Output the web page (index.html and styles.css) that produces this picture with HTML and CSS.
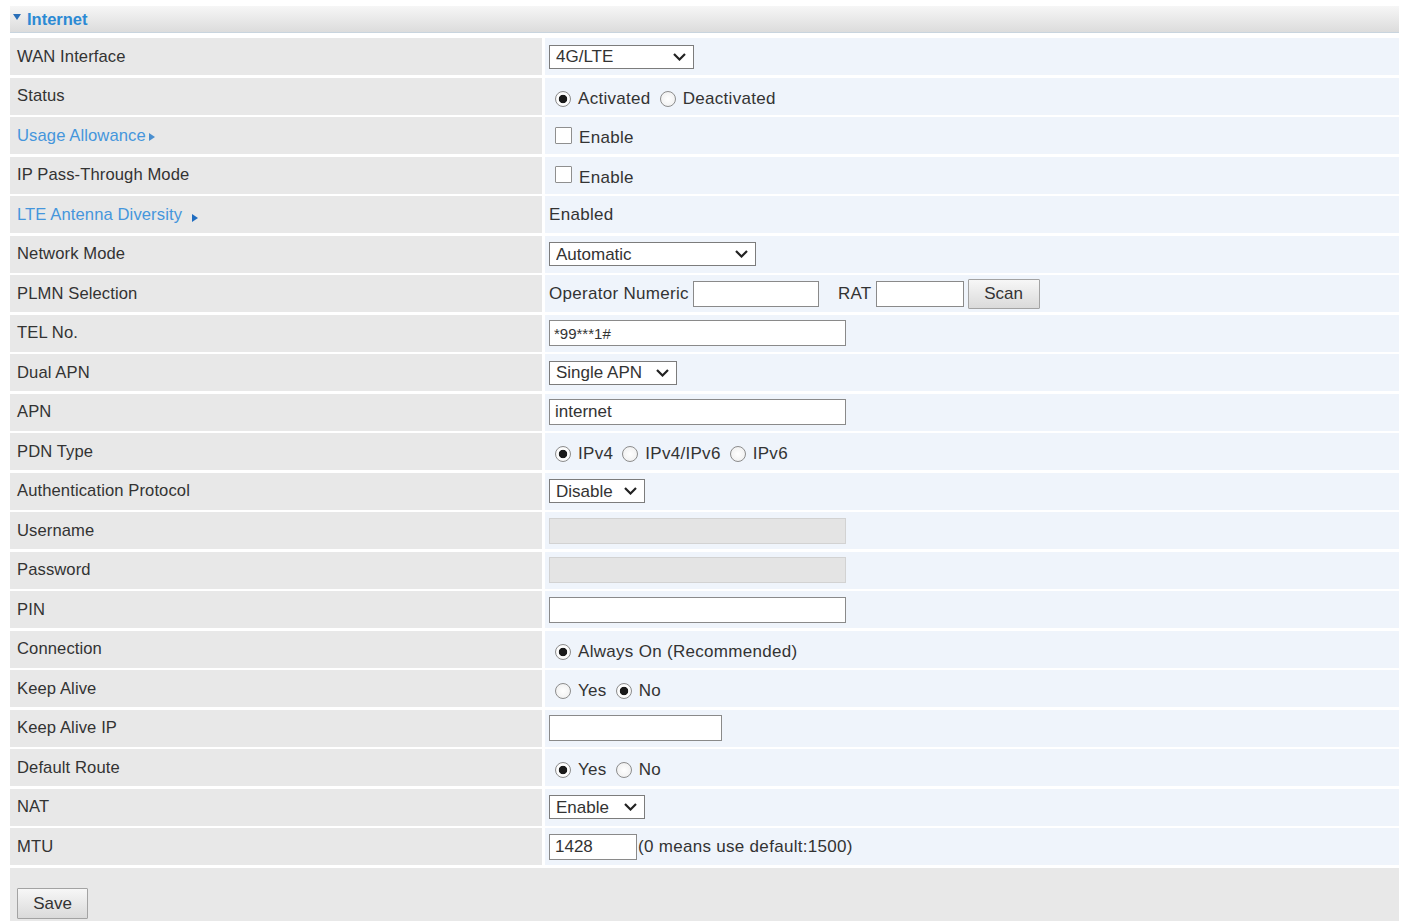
FILE: index.html
```html
<!DOCTYPE html>
<html lang="en">
  <head>
    <meta charset="UTF-8" />
    <title>Internet</title>
    <link rel="stylesheet" href="styles.css">
  </head>
  <body>
    <div class="panel">
      <div class="panel-title">
        <svg class="caret" width="8" height="6" viewBox="0 0 8 6"><polygon points="0,0 8,0 4,6" fill="#2a6fb8"/></svg>
        Internet
      </div>

      <form class="form-table">
        <div class="row">
          <div class="label">WAN Interface</div>
          <div class="field">
            <span class="select w-wan">
              <select><option>4G/LTE</option></select>
              <svg class="chev" width="13" height="8" viewBox="0 0 13 8"><polyline points="1,1 6.5,6.5 12,1" fill="none" stroke="#222" stroke-width="2.2"/></svg>
            </span>
          </div>
        </div>
        <div class="row">
          <div class="label">Status</div>
          <div class="field choices">
            <label class="choice"><input type="radio" name="status" checked />Activated</label>
            <label class="choice"><input type="radio" name="status" />Deactivated</label>
          </div>
        </div>
        <div class="row">
          <div class="label"><a class="link" href="#">Usage Allowance<svg class="arrow" width="6" height="8" viewBox="0 0 6 8"><polygon points="0,0 6,4 0,8" fill="#4a8fd0"/></svg></a></div>
          <div class="field choices">
            <label class="choice"><input type="checkbox" />Enable</label>
          </div>
        </div>
        <div class="row">
          <div class="label">IP Pass-Through Mode</div>
          <div class="field choices">
            <label class="choice"><input type="checkbox" />Enable</label>
          </div>
        </div>
        <div class="row">
          <div class="label"><a class="link" href="#">LTE Antenna Diversity<svg class="arrow lte" width="6" height="8" viewBox="0 0 6 8"><polygon points="0,0 6,4 0,8" fill="#1f6cc0"/></svg></a></div>
          <div class="field">Enabled</div>
        </div>
        <div class="row">
          <div class="label">Network Mode</div>
          <div class="field">
            <span class="select w-mode">
              <select><option>Automatic</option></select>
              <svg class="chev" width="13" height="8" viewBox="0 0 13 8"><polyline points="1,1 6.5,6.5 12,1" fill="none" stroke="#222" stroke-width="2.2"/></svg>
            </span>
          </div>
        </div>
        <div class="row">
          <div class="label">PLMN Selection</div>
          <div class="field">
            <span class="inline-label">Operator Numeric</span>
            <input class="text w-op" type="text" />
            <span class="inline-label rat">RAT</span>
            <input class="text w-rat" type="text" />
            <button type="button" class="btn scan">Scan</button>
          </div>
        </div>
        <div class="row">
          <div class="label">TEL No.</div>
          <div class="field"><input class="text w-long small-text" type="text" value="*99***1#" /></div>
        </div>
        <div class="row">
          <div class="label">Dual APN</div>
          <div class="field">
            <span class="select w-apn">
              <select><option>Single APN</option></select>
              <svg class="chev" width="13" height="8" viewBox="0 0 13 8"><polyline points="1,1 6.5,6.5 12,1" fill="none" stroke="#222" stroke-width="2.2"/></svg>
            </span>
          </div>
        </div>
        <div class="row">
          <div class="label">APN</div>
          <div class="field"><input class="text w-long" type="text" value="internet" /></div>
        </div>
        <div class="row">
          <div class="label">PDN Type</div>
          <div class="field choices">
            <label class="choice"><input type="radio" name="pdn" checked />IPv4</label>
            <label class="choice"><input type="radio" name="pdn" />IPv4/IPv6</label>
            <label class="choice"><input type="radio" name="pdn" />IPv6</label>
          </div>
        </div>
        <div class="row">
          <div class="label">Authentication Protocol</div>
          <div class="field">
            <span class="select w-short">
              <select><option>Disable</option></select>
              <svg class="chev" width="13" height="8" viewBox="0 0 13 8"><polyline points="1,1 6.5,6.5 12,1" fill="none" stroke="#222" stroke-width="2.2"/></svg>
            </span>
          </div>
        </div>
        <div class="row">
          <div class="label">Username</div>
          <div class="field"><input class="text w-long" type="text" disabled /></div>
        </div>
        <div class="row">
          <div class="label">Password</div>
          <div class="field"><input class="text w-long" type="password" disabled /></div>
        </div>
        <div class="row">
          <div class="label">PIN</div>
          <div class="field"><input class="text w-long" type="text" /></div>
        </div>
        <div class="row">
          <div class="label">Connection</div>
          <div class="field choices">
            <label class="choice"><input type="radio" name="conn" checked />Always On (Recommended)</label>
          </div>
        </div>
        <div class="row">
          <div class="label">Keep Alive</div>
          <div class="field choices">
            <label class="choice"><input type="radio" name="keep" />Yes</label>
            <label class="choice"><input type="radio" name="keep" checked />No</label>
          </div>
        </div>
        <div class="row">
          <div class="label">Keep Alive IP</div>
          <div class="field"><input class="text w-ip" type="text" /></div>
        </div>
        <div class="row">
          <div class="label">Default Route</div>
          <div class="field choices">
            <label class="choice"><input type="radio" name="route" checked />Yes</label>
            <label class="choice"><input type="radio" name="route" />No</label>
          </div>
        </div>
        <div class="row">
          <div class="label">NAT</div>
          <div class="field">
            <span class="select w-short">
              <select><option>Enable</option></select>
              <svg class="chev" width="13" height="8" viewBox="0 0 13 8"><polyline points="1,1 6.5,6.5 12,1" fill="none" stroke="#222" stroke-width="2.2"/></svg>
            </span>
          </div>
        </div>
        <div class="row">
          <div class="label">MTU</div>
          <div class="field">
            <input class="text w-mtu" type="text" value="1428" /><span class="hint">(0 means use default:1500)</span>
          </div>
        </div>
      </form>

      <div class="actions">
        <button type="button" class="btn save">Save</button>
      </div>
    </div>
  </body>
</html>
```

FILE: styles.css
```css
body {
  font-family: "Liberation Sans", Arial, sans-serif;
  color: #333;
  background-color: #fff;
  margin: 0;
  padding: 6px 2px 0 10px;
}

.panel {
  display: flex;
  flex-direction: column;
}

.panel-title {
  display: flex;
  align-items: center;
  height: 26px;
  padding-left: 3px;
  background: linear-gradient(#f6f6f6, #dcdcdc);
  border-bottom: 1px solid #c8d4de;
  color: #2b8ad4;
  font-weight: bold;
  font-size: 16.5px;
  margin-bottom: 5px;
}

.caret {
  margin-right: 6px;
  margin-top: -4px;
}

.form-table {
  display: flex;
  flex-direction: column;
  gap: 2.5px;
}

.row {
  display: grid;
  grid-template-columns: 532px 1fr;
  column-gap: 3px;
  height: 37px;
}

.label {
  display: flex;
  align-items: center;
  padding-left: 7px;
  background-color: #e8e8e8;
  font-size: 16.6px;
  letter-spacing: 0.1px;
  color: #333;
}

.link {
  color: #4596dc;
  text-decoration: none;
}

.arrow {
  margin-left: 3px;
}

.arrow.lte {
  margin-left: 10px;
  vertical-align: -2px;
}

.field {
  display: flex;
  align-items: center;
  padding-left: 4px;
  background-color: #eff4fb;
  font-size: 17px;
  letter-spacing: 0.3px;
  color: #333;
}

.choices {
  padding-top: 5px;
}

.choice {
  display: inline-flex;
  align-items: center;
  margin-right: 3px;
}

.choice input {
  appearance: none;
  margin: 0 7px 0 6px;
  width: 16px;
  height: 16px;
  border: 1px solid #8c8c8c;
  background: radial-gradient(#fff, #ececec);
}

.choice input[type="radio"] {
  border-radius: 50%;
}

.choice input[type="radio"]:checked {
  background: radial-gradient(circle, #1a1a1a 0 3.8px, #fff 4.6px, #f0f0f0);
}

.choice input[type="checkbox"] {
  width: 17px;
  height: 17px;
  margin: -6px 7px 0 6px;
  border-color: #8f8f8f;
  border-radius: 1px;
  background: #fff;
}

.select {
  display: inline-flex;
  align-items: center;
  height: 24px;
  box-sizing: border-box;
  border: 1px solid #7c7c7c;
  background-color: #fff;
}

.select select {
  appearance: none;
  flex: 1;
  min-width: 0;
  border: none;
  background: transparent;
  font-family: inherit;
  font-size: 17px;
  color: #333;
  padding: 0 0 0 6px;
  outline: none;
}

.chev {
  margin-right: 7px;
  flex-shrink: 0;
}

.w-wan { width: 145px; }
.w-mode { width: 207px; }
.w-apn { width: 128px; }
.w-short { width: 96px; }

.text {
  height: 26px;
  box-sizing: border-box;
  border: 1px solid #8a8a8a;
  background-color: #fff;
  font-family: inherit;
  font-size: 17px;
  color: #333;
  padding: 0 5px;
  margin: 0;
}

.text.small-text {
  font-size: 15px;
  padding-left: 4px;
}

.text:disabled {
  background-color: #e4e4e4;
  border-color: #d2d2d2;
}

.w-long { width: 297px; }
.w-op { width: 126px; margin-left: 4px; }
.w-rat { width: 88px; margin-left: 4px; }
.w-ip { width: 173px; }
.w-mtu { width: 88px; }

.rat {
  margin-left: 19px;
}

.hint {
  margin-left: 1px;
}

.btn {
  font-family: inherit;
  font-size: 17px;
  color: #333;
  background: linear-gradient(#f7f7f7, #dadada);
  border: 1px solid #a3a3a3;
  border-radius: 1px;
  cursor: pointer;
  padding: 0;
}

.scan {
  width: 72px;
  height: 30px;
  margin-left: 4px;
}

.actions {
  margin-top: 3px;
  background-color: #e8e8e8;
  padding: 20px 0 10px 7px;
}

.save {
  width: 71px;
  height: 31px;
}
```
